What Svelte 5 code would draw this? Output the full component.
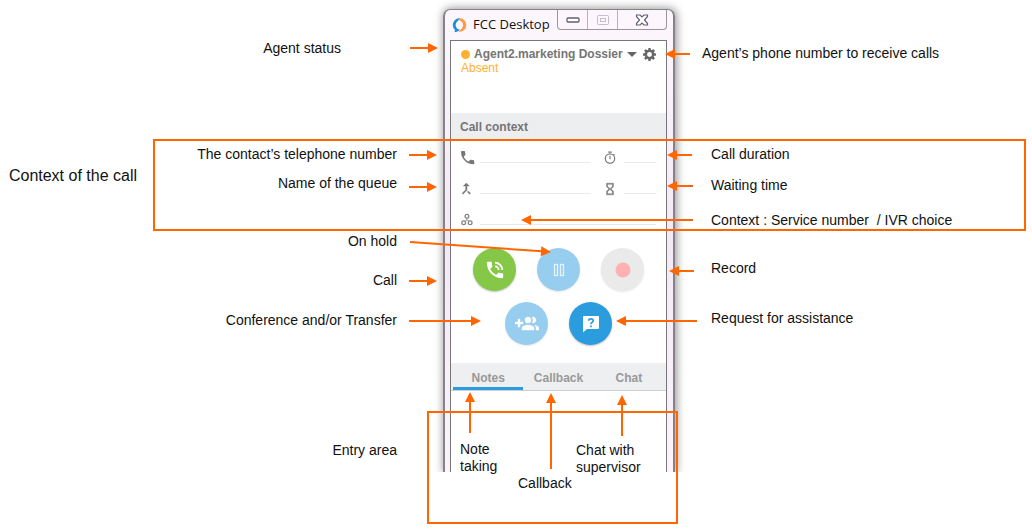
<script>
  let activeTab = $state('Notes');
  const tabs = ['Notes', 'Callback', 'Chat'];

  // Callouts: distances are measured from the edges of the application window.
  const leftLabels = [
    { text: 'Agent status', top: 40, gap: 102 },
    { text: 'The contact’s telephone number', top: 146, gap: 46 },
    { text: 'Name of the queue', top: 175, gap: 46 },
    { text: 'On hold', top: 233, gap: 46 },
    { text: 'Call', top: 272, gap: 46 },
    { text: 'Conference and/or Transfer', top: 312, gap: 46 },
    { text: 'Entry area', top: 442, gap: 46 }
  ];
  const rightLabels = [
    { text: 'Agent’s phone number to receive calls', top: 45, gap: 27 },
    { text: 'Call duration', top: 146, gap: 36 },
    { text: 'Waiting time', top: 177, gap: 36 },
    { text: 'Context : Service number  / IVR choice', top: 212, gap: 36 },
    { text: 'Record', top: 260, gap: 36 },
    { text: 'Request for assistance', top: 310, gap: 36 }
  ];
  const innerLabels = [
    { text: 'Note\ntaking', top: 441, left: 17 },
    { text: 'Chat with\nsupervisor', top: 442, left: 133 },
    { text: 'Callback', top: 475, left: 75 }
  ];
  const arrows = [
    [-33, 48, -5, 48],
    [247, 54, 222, 54],
    [-34, 155, -6, 155],
    [-34, 187, -6, 187],
    [249, 155, 224, 155],
    [250, 186, 224, 186],
    [250, 220, 78, 220],
    [-33, 242, 108, 252],
    [-34, 281, -6, 281],
    [251, 271, 226, 271],
    [-34, 321, 38, 321],
    [254, 321, 173, 321],
    [27, 433, 27, 392],
    [108, 469, 108, 393],
    [179, 436, 179, 395]
  ];
</script>

<main class="page">
  <div class="stage">
    <section class="window" aria-label="FCC Desktop">
      <header class="titlebar">
        <svg class="logo" viewBox="0 0 16 16" aria-hidden="true">
          <path d="M9 .8A7.200 7.200 0 0 0 3.200 13.200L2.600 15.600L6 15L8.500 13A5 5 0 0 1 6 4Q7 2.500 9 .8Z" fill="#1f8fdc" />
          <path d="M7 15.200A7.200 7.200 0 0 0 9 .8L7.200 2.900A5.200 5.200 0 0 1 10.500 11.500Q9.500 13 7 15.200Z" fill="#ff9a42" />
        </svg>
        <span class="title">FCC Desktop</span>
        <div class="controls">
          <button aria-label="Minimize">
            <svg width="14" height="6" viewBox="0 0 14 6"><rect x="1" y="1" width="12" height="4" rx="1" fill="#fff" stroke="#5f6070" stroke-width="1.300" /></svg>
          </button>
          <button aria-label="Maximize">
            <svg width="14" height="12" viewBox="0 0 14 12" fill="none" stroke="#c3bfc8"><rect x="1.500" y="1.500" width="11" height="9" rx="1" /><rect x="4.500" y="4.500" width="5" height="3" /></svg>
          </button>
          <button class="close" aria-label="Close">
            <svg width="14" height="12" viewBox="0 0 14 12"><path d="M1.500 1H5L7 3L9 1H12.500V2.500L9.500 6L12.500 9.500V11H9L7 9L5 11H1.500V9.500L4.500 6L1.500 2.500Z" fill="#fff" stroke="#5f6070" stroke-width="1.200" /></svg>
          </button>
        </div>
      </header>

      <div class="body">
        <div class="agent">
          <div class="identity">
            <span class="dot"></span>
            <button class="name">Agent2.marketing Dossier<span class="caret"></span></button>
            <button class="gear" aria-label="Settings">
              <svg viewBox="0 0 20 20"><g fill="#666"><rect x="8" y="0" width="4" height="20" rx="1" /><rect x="8" y="0" width="4" height="20" rx="1" transform="rotate(45 10 10)" /><rect x="8" y="0" width="4" height="20" rx="1" transform="rotate(90 10 10)" /><rect x="8" y="0" width="4" height="20" rx="1" transform="rotate(135 10 10)" /><circle cx="10" cy="10" r="7.500" /></g><circle cx="10" cy="10" r="3.800" fill="#fff" /></svg>
            </button>
          </div>
          <div class="status">Absent</div>
        </div>

        <h2>Call context</h2>
        <div class="context">
          <div class="row">
            <svg class="icon" viewBox="3 3 19 19"><path d="M6.620 10.790c1.440 2.830 3.760 5.140 6.590 6.590l2.200-2.200c.27-.27.67-.36 1.020-.24 1.120.37 2.330.57 3.570.57.55 0 1 .45 1 1V20c0 .55-.45 1-1 1-9.390 0-17-7.610-17-17 0-.55.45-1 1-1h3.500c.55 0 1 .45 1 1 0 1.250.2 2.450.57 3.570.11.35.03.74-.25 1.020z" /></svg>
            <input readonly aria-label="Telephone number" />
            <svg class="icon second" viewBox="0 0 24 24"><path d="M15 1H9v2h6zm-4 13h2V8h-2zm8.030-6.610l1.420-1.420c-.43-.51-.9-.99-1.410-1.410l-1.420 1.420A9 9 0 1 0 19.030 7.390zM12 20a7 7 0 1 1 0-14 7 7 0 0 1 0 14z" /></svg>
            <input class="short" readonly aria-label="Call duration" />
          </div>
          <div class="row">
            <svg class="icon" viewBox="4 2 21 21"><path d="M17 20.410L18.410 19 15 15.590 13.590 17zM7.500 8H11v5.590L5.590 19 7 20.410l6-6V8h3.500L12 3.500z" stroke="#777" stroke-width=".6" /></svg>
            <input readonly aria-label="Queue" />
            <svg class="icon second" viewBox="0 0 24 24"><path d="M6 2v6l4 4-4 4v6h12v-6l-4-4 4-4V2zm10 14.500V20H8v-3.500l4-4zm-4-5l-4-4V4h8v3.500z" stroke="#777" stroke-width=".7" /></svg>
            <input class="short" readonly aria-label="Waiting time" />
          </div>
          <div class="row">
            <svg class="icon" viewBox="1 0 26 26"><g fill="none" stroke="#858585" stroke-width="2.400"><circle cx="12" cy="6" r="3.500" /><circle cx="6" cy="18" r="3.500" /><circle cx="18" cy="18" r="3.500" /><path d="M12 9v4l-4 2M12 13l4 2" stroke-width="1.500" /></g></svg>
            <input readonly aria-label="Service context" />
          </div>
        </div>

        <div class="actions">
          <button class="round green" aria-label="Call">
            <svg viewBox="1 1 22 22"><path d="M20 15.500c-1.250 0-2.450-.2-3.570-.57-.35-.11-.74-.03-1.020.24l-2.200 2.200a15.050 15.050 0 0 1-6.590-6.590l2.200-2.200c.28-.27.36-.66.25-1.010A11.360 11.360 0 0 1 8.500 4c0-.55-.45-1-1-1H4c-.55 0-1 .45-1 1 0 9.390 7.610 17 17 17 .55 0 1-.45 1-1v-3.500c0-.55-.45-1-1-1zM19 12h2a9 9 0 0 0-9-9v2a7 7 0 0 1 7 7zm-4 0h2a5 5 0 0 0-5-5v2a3 3 0 0 1 3 3z" /></svg>
          </button>
          <button class="round pale" aria-label="Hold">
            <svg viewBox="0 0 20 20"><g fill="none" stroke="#fff" stroke-opacity=".75" stroke-width="1.300"><rect x="5.500" y="4.500" width="3" height="11" /><rect x="11.500" y="4.500" width="3" height="11" /></g></svg>
          </button>
          <button class="round grey" aria-label="Record">
            <svg viewBox="0 0 20 20"><circle cx="10" cy="10" r="7.500" fill="#ffb1b1" /></svg>
          </button>
        </div>
        <div class="actions">
          <button class="round pale" aria-label="Conference or transfer">
            <svg class="wide" viewBox="0 0 24 24"><path d="M8 10H5V7H3v3H0v2h3v3h2v-3h3zm10 1a3 3 0 1 0-.91-5.860 5 5 0 0 1 0 5.720c.29.09.59.14.91.14zm-5 0a3 3 0 1 0 0-6 3 3 0 0 0 0 6zm6.620 2.160c.83.73 1.380 1.660 1.380 2.840v2h3v-2c0-1.540-2.370-2.490-4.380-2.840zM13 13c-2 0-6 1-6 3v2h12v-2c0-2-4-3-6-3z" stroke="#fff" stroke-width=".4" /></svg>
          </button>
          <button class="round blue" aria-label="Request assistance">
            <svg viewBox="0 0 20 20"><path d="M3 2h14q1 0 1 1v11q0 1-1 1H6l-4 3.500V3q0-1 1-1z" /><path d="M7.700 6.700Q7.700 4.800 10 4.800Q12.200 4.800 12.200 6.600Q12.200 7.700 11 8.400Q10 9.100 10 10.200M10 11.500V13.200" fill="none" stroke="#2b9cdd" stroke-width="1.700" /></svg>
          </button>
        </div>

        <div class="tabs" role="tablist">
          {#each tabs as tab}
            <button role="tab" aria-selected={activeTab === tab} class:active={activeTab === tab} onclick={() => (activeTab = tab)}>{tab}</button>
          {/each}
        </div>
        <div class="entry"></div>
      </div>
    </section>

    <svg class="overlay" width="232" height="530" aria-hidden="true">
      <g fill="none" stroke="#ff6600" stroke-width="2">
        <rect x="-289" y="140" width="871" height="90" />
        <rect x="-15" y="412" width="249" height="111" />
      </g>
      {#each arrows as [x1, y1, x2, y2]}
        {@const length = Math.hypot(x2 - x1, y2 - y1)}
        <g transform="translate({x2} {y2}) rotate({(Math.atan2(y2 - y1, x2 - x1) * 180) / Math.PI})">
          <path d="M{-length} 0H-9" stroke="#ff6600" stroke-width="2" />
          <path d="M0 0L-10 -5V5Z" fill="#ff6600" />
        </g>
      {/each}
    </svg>

    {#each leftLabels as label}
      <span class="label" style="top: {label.top}px; right: calc(100% + {label.gap}px)">{label.text}</span>
    {/each}
    {#each rightLabels as label}
      <span class="label" style="top: {label.top}px; left: calc(100% + {label.gap}px)">{label.text}</span>
    {/each}
    {#each innerLabels as label}
      <span class="label" style="top: {label.top}px; left: {label.left}px">{label.text}</span>
    {/each}
    <span class="label heading">Context of the call</span>
  </div>
</main>

<style>
  :global(body) {
    margin: 0;
    background: #fff;
    overflow-x: hidden;
  }
  .page {
    display: grid;
    grid-template-columns: 443fr 232px 357fr;
    font-family: "Liberation Sans", Arial, sans-serif;
  }
  .stage {
    grid-column: 2;
    position: relative;
    min-height: 530px;
    padding-top: 9px;
    box-sizing: border-box;
  }
  button {
    padding: 0;
    border: 0;
    background: none;
    font: inherit;
    color: inherit;
    cursor: pointer;
  }
  svg {
    display: block;
  }
  .window {
    box-sizing: border-box;
    padding: 0 6px 0 5px;
    border: 2px solid #858288;
    border-top-width: 1px;
    border-bottom: 0;
    border-radius: 7px 7px 0 0;
    background: linear-gradient(#fdf7fd, #f3e9f5 50%, #fbf4fb);
    box-shadow: 1px 0 9px 1px rgba(0, 0, 0, 0.4);
    clip-path: inset(-12px -12px 0 -12px);
  }
  .titlebar {
    display: flex;
    height: 30px;
    padding-left: 2px;
  }
  .logo {
    width: 15px;
    height: 16px;
    margin-top: 7px;
  }
  .title {
    flex: 1;
    padding-left: 6px;
    font: 13px/28px "Open Sans", "Noto Sans", sans-serif;
    color: #111;
    white-space: nowrap;
  }
  .controls {
    display: flex;
    height: 19px;
    border: 1px solid #9a969e;
    border-top: 0;
    border-radius: 0 0 4px 4px;
  }
  .controls button {
    display: grid;
    place-items: center;
    width: 30px;
    border-right: 1px solid #b7b2bb;
  }
  .controls .close {
    width: 48px;
    border: 0;
  }
  .body {
    border: 1px solid #77777a;
    border-bottom: 0;
    background: #fff;
    color: #757575;
    font-size: 12px;
  }
  .agent {
    height: 66px;
    padding: 6px 10px 0;
  }
  .identity {
    display: flex;
    align-items: center;
    height: 14px;
  }
  .dot {
    width: 9px;
    height: 9px;
    margin-right: 4px;
    border-radius: 50%;
    background: #ffb030;
  }
  .name {
    display: flex;
    align-items: center;
    flex: 1;
    font-weight: bold;
    white-space: nowrap;
  }
  .caret {
    margin-left: 4px;
    border: 5px solid transparent;
    border-top-color: #666;
    border-bottom: 0;
  }
  .gear svg {
    width: 13px;
    height: 13px;
  }
  .status {
    line-height: 14px;
    color: #ffb030;
  }
  h2 {
    margin: 0;
    padding-left: 9px;
    background: #eceef0;
    font-size: 12px;
    line-height: 28px;
  }
  .context {
    padding: 8px 10px 3px;
  }
  .row {
    display: flex;
    align-items: flex-start;
    height: 31px;
  }
  .icon {
    width: 14px;
    height: 14px;
    margin-top: 2px;
    fill: #777;
  }
  .second {
    margin-left: 12px;
  }
  .row input {
    flex: 1;
    min-width: 0;
    height: 14px;
    box-sizing: border-box;
    margin: 0 0 0 5px;
    padding: 0;
    border: 0;
    border-bottom: 1px solid #ebebeb;
    border-radius: 0;
    background: none;
    outline: 0;
  }
  .row .short {
    flex: 0 0 32px;
    margin-left: 7px;
  }
  .actions {
    display: flex;
    justify-content: center;
    gap: 21px;
    padding-top: 3px;
    height: 51px;
  }
  .round {
    display: grid;
    place-items: center;
    width: 43px;
    height: 43px;
    border-radius: 50%;
    box-shadow: 0 1px 2px rgba(0, 0, 0, 0.25);
  }
  .round svg {
    width: 20px;
    height: 20px;
    fill: #fff;
  }
  .round .wide {
    width: 24px;
    height: 24px;
  }
  .green {
    background: #85c747;
  }
  .pale {
    background: #97ceef;
    box-shadow: 0 1px 2px rgba(0, 0, 0, 0.1);
  }
  .grey {
    background: #eaeaea;
    box-shadow: 0 1px 2px rgba(0, 0, 0, 0.1);
  }
  .blue {
    background: #2b9cdd;
  }
  .tabs {
    display: grid;
    grid-template-columns: repeat(3, 1fr);
    height: 27px;
    margin-top: 10px;
    padding: 0 2px;
    border-bottom: 1px solid #cfcfcf;
    background: #eeeff0;
    color: #999;
    font-weight: bold;
  }
  .tabs button {
    padding-top: 5px;
    border-bottom: 3px solid transparent;
  }
  .tabs .active {
    border-color: #2b9cdd;
  }
  .entry {
    height: 81px;
  }
  .overlay {
    position: absolute;
    top: 0;
    left: 0;
    overflow: visible;
    pointer-events: none;
  }
  .label {
    position: absolute;
    font-size: 14px;
    line-height: 17px;
    white-space: pre;
    color: #111;
  }
  .heading {
    top: 167px;
    right: calc(100% + 306px);
    font-size: 16px;
  }
</style>
